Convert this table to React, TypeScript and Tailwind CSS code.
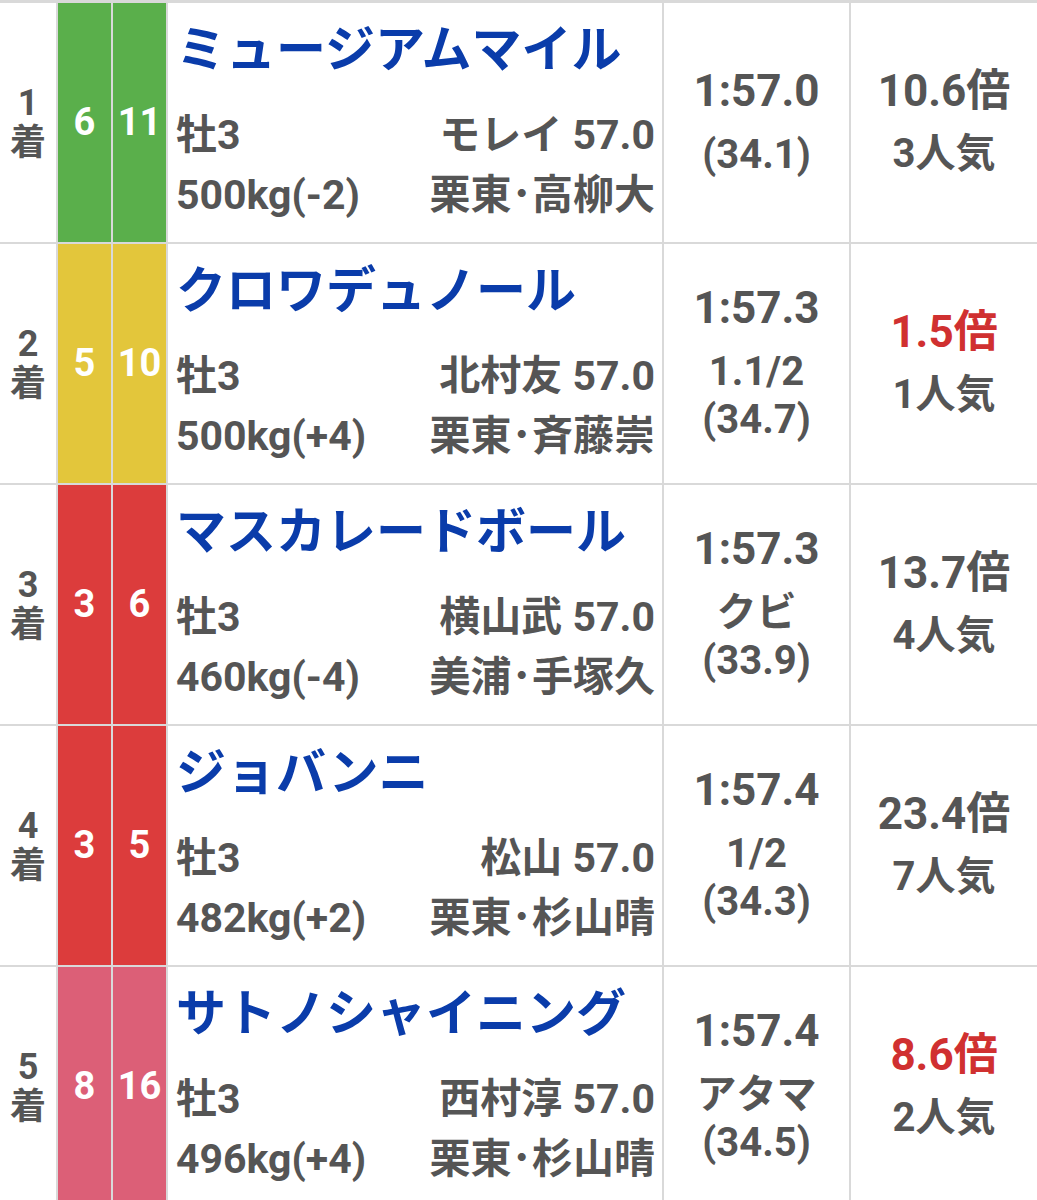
import React from 'react'

type Row = {
  rank: number
  frame: number
  num: number
  frameColor: string
  name: string
  sexAge: string
  jockey: string
  weight: string
  trainer: string
  time: string
  margin: string
  last3f: string
  odds: string
  pop: string
  hot: boolean
}

const rows: Row[] = [
  {
    rank: 1, frame: 6, num: 11, frameColor: 'bg-[#5aaf4b]',
    name: 'ミュージアムマイル', sexAge: '牡3', jockey: 'モレイ 57.0', weight: '500kg(-2)', trainer: '栗東･高柳大',
    time: '1:57.0', margin: '', last3f: '(34.1)', odds: '10.6倍', pop: '3人気', hot: false
  },
  {
    rank: 2, frame: 5, num: 10, frameColor: 'bg-[#e3c63b]',
    name: 'クロワデュノール', sexAge: '牡3', jockey: '北村友 57.0', weight: '500kg(+4)', trainer: '栗東･斉藤崇',
    time: '1:57.3', margin: '1.1/2', last3f: '(34.7)', odds: '1.5倍', pop: '1人気', hot: true
  },
  {
    rank: 3, frame: 3, num: 6, frameColor: 'bg-[#dc3c3c]',
    name: 'マスカレードボール', sexAge: '牡3', jockey: '横山武 57.0', weight: '460kg(-4)', trainer: '美浦･手塚久',
    time: '1:57.3', margin: 'クビ', last3f: '(33.9)', odds: '13.7倍', pop: '4人気', hot: false
  },
  {
    rank: 4, frame: 3, num: 5, frameColor: 'bg-[#dc3c3c]',
    name: 'ジョバンニ', sexAge: '牡3', jockey: '松山 57.0', weight: '482kg(+2)', trainer: '栗東･杉山晴',
    time: '1:57.4', margin: '1/2', last3f: '(34.3)', odds: '23.4倍', pop: '7人気', hot: false
  },
  {
    rank: 5, frame: 8, num: 16, frameColor: 'bg-[#dc5f77]',
    name: 'サトノシャイニング', sexAge: '牡3', jockey: '西村淳 57.0', weight: '496kg(+4)', trainer: '栗東･杉山晴',
    time: '1:57.4', margin: 'アタマ', last3f: '(34.5)', odds: '8.6倍', pop: '2人気', hot: true
  }
]

const font = { fontFamily: 'Roboto, "Noto Sans CJK JP", sans-serif' }

export default function App() {
  return (
    <div className="h-[1200px] w-[1037px] overflow-hidden bg-[#d9d9d9] pt-[3px]" style={font}>
      <div className="grid grid-cols-[56px_53px_53px_494px_185px_186px] auto-rows-[239px] gap-[2px] font-bold text-[#555555]">
        {rows.map((r) => (
          <React.Fragment key={r.rank}>
            <div className="flex flex-col items-center justify-center bg-white text-[36px] leading-[40px]">
              <span>{r.rank}</span>
              <span>着</span>
            </div>
            <div className={`flex items-center justify-center ${r.frameColor} text-[38px] text-white`}>
              {r.frame}
            </div>
            <div className={`flex items-center justify-center ${r.frameColor} text-[38px] text-white`}>
              {r.num}
            </div>
            <div className="flex flex-col bg-white pl-[8px] pr-[7px]">
              <div className="mt-[17px] whitespace-nowrap text-[50px] leading-[60px] text-[#0a3caa]">{r.name}</div>
              <div className="mt-[25px] flex justify-between whitespace-nowrap text-[41px] leading-[60px]">
                <span>{r.sexAge}</span>
                <span>{r.jockey}</span>
              </div>
              <div className="flex justify-between whitespace-nowrap text-[41px] leading-[60px]">
                <span>{r.weight}</span>
                <span>{r.trainer}</span>
              </div>
            </div>
            <div className="flex flex-col items-center justify-center bg-white text-[40px] leading-[48px]">
              <span className="text-[44px]">{r.time}</span>
              <div className="mt-[16px] flex flex-col items-center">
                {r.margin && <span>{r.margin}</span>}
                <span>{r.last3f}</span>
              </div>
            </div>
            <div className="flex flex-col items-center justify-center gap-[15px] bg-white text-[40px] leading-[48px]">
              <span className={r.hot ? 'text-[44px] text-[#d03030]' : 'text-[44px]'}>{r.odds}</span>
              <span>{r.pop}</span>
            </div>
          </React.Fragment>
        ))}
      </div>
    </div>
  )
}
